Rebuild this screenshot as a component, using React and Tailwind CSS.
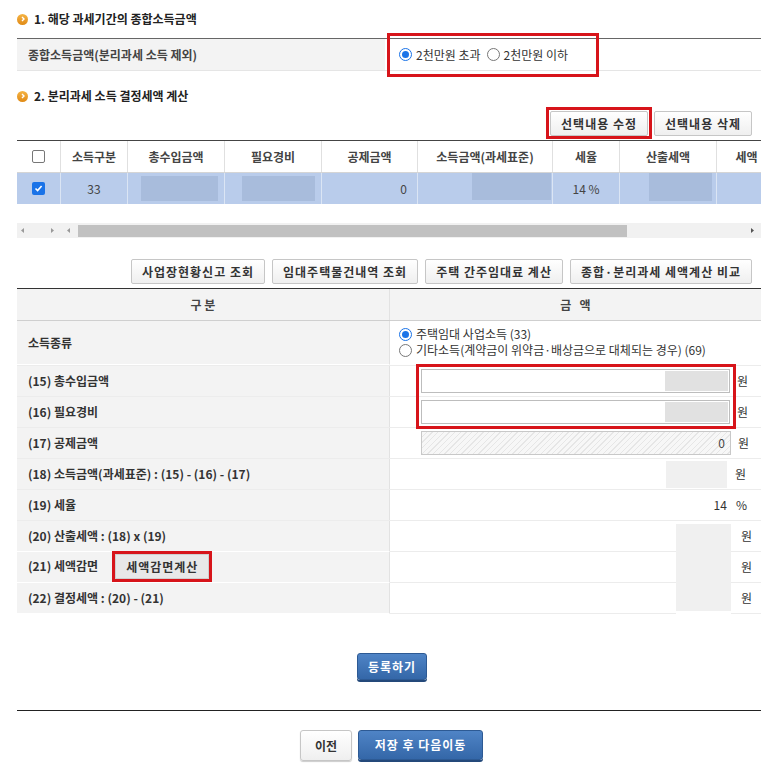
import React from 'react';

const font = { fontFamily: '"Noto Sans CJK KR", "Noto Sans", sans-serif' };

function Bullet() {
    return (
        <span className="inline-flex items-center justify-center w-[11px] h-[11px] rounded-full bg-gradient-to-b from-[#f5b443] to-[#e08a12] mr-[6px]">
            <svg width="6" height="6" viewBox="0 0 6 6">
                <path d="M2 1 L4 3 L2 5" stroke="#fff" strokeWidth="1.4" fill="none" />
            </svg>
        </span>
    );
}

function Radio({ checked }) {
    return (
        <span
            className={
                'inline-flex items-center justify-center w-[13px] h-[13px] rounded-full border mr-[4px] shrink-0 ' +
                (checked ? 'border-[#1a73e8] bg-white' : 'border-[#777] bg-white')
            }
        >
            {checked && <span className="w-[7px] h-[7px] rounded-full bg-[#1a73e8]" />}
        </span>
    );
}

function Btn({ children, className = '' }) {
    return (
        <button
            className={
                'block h-[25px] px-[10px] border border-[#c6c6c6] rounded-[2px] bg-gradient-to-b from-white to-[#efefef] text-[12px] font-bold text-[#333] tracking-[1px] whitespace-nowrap ' +
                className
            }
        >
            {children}
        </button>
    );
}

function BlueBtn({ children, className = '' }) {
    return (
        <button
            className={
                'block border border-[#2d5a94] rounded-[3px] bg-gradient-to-b from-[#4f84c6] to-[#3467a8] text-white text-[12px] font-bold tracking-[1px] shadow-[0_2px_0_#24497a] ' +
                className
            }
        >
            {children}
        </button>
    );
}

function Label({ children, className = '' }) {
    return (
        <div
            className={
                'w-[373px] shrink-0 bg-[#f3f3f3] border-r border-[#e2e2e2] pl-[11px] flex items-center text-[12px] font-bold text-[#333] ' +
                className
            }
        >
            {children}
        </div>
    );
}

const cols = [
    { w: 44, t: '' },
    { w: 67, t: '소득구분' },
    { w: 97, t: '총수입금액' },
    { w: 97, t: '필요경비' },
    { w: 96, t: '공제금액' },
    { w: 135, t: '소득금액(과세표준)' },
    { w: 67, t: '세율' },
    { w: 97, t: '산출세액' },
    { w: 60, t: '세액' },
];

export default function App() {
    return (
        <div className="w-[773px] h-[764px] bg-white pl-[17px] pr-[12px] pt-[11px] text-[#333] overflow-hidden" style={font}>
            {/* 1 */}
            <h2 className="h-[16px] flex items-center text-[12px] font-bold text-[#222]">
                <Bullet />
                1. 해당 과세기간의 종합소득금액
            </h2>
            <div className="mt-[11px] border-t border-[#666] border-b border-b-[#e5e5e5] h-[33px] flex">
                <div className="w-[368px] bg-[#f3f3f3] pl-[11px] flex items-center text-[12px] font-bold text-[#444]">
                    종합소득금액(분리과세 소득 제외)
                </div>
                <div className="relative flex-1 flex items-center pl-[14px] text-[12px] text-[#333]">
                    <span className="absolute left-[2px] top-[-6px] w-[212px] h-[44px] border-[3px] border-[#d7141a]" />
                    <Radio checked />
                    <span className="mr-[6px]">2천만원 초과</span>
                    <Radio />
                    <span>2천만원 이하</span>
                </div>
            </div>

            {/* 2 */}
            <h2 className="mt-[17px] h-[16px] flex items-center text-[12px] font-bold text-[#222]">
                <Bullet />
                2. 분리과세 소득 결정세액 계산
            </h2>
            <div className="mt-[7px] flex justify-end gap-[6px] pr-[9px]">
                <div className="relative flex">
                    <span className="absolute left-[-4px] top-[-4px] right-[-4px] bottom-[-3px] border-[3px] border-[#d7141a]" />
                    <Btn>선택내용 수정</Btn>
                </div>
                <Btn>선택내용 삭제</Btn>
            </div>

            {/* grid */}
            <div className="mt-[4px] border-t border-[#444] overflow-hidden">
                <div className="flex h-[32px] border-b border-[#d5d5d5]">
                    {cols.map((c, i) => (
                        <div
                            key={i}
                            style={{ width: c.w }}
                            className="shrink-0 flex items-center justify-center border-r border-[#e0e0e0] text-[12px] font-bold text-[#444] whitespace-nowrap"
                        >
                            {i === 0 ? (
                                <span className="w-[13px] h-[13px] border border-[#777] rounded-[2px] bg-white" />
                            ) : (
                                c.t
                            )}
                        </div>
                    ))}
                </div>
                <div className="flex h-[31px] bg-[#b9cceb]">
                    {cols.map((c, i) => (
                        <div
                            key={i}
                            style={{ width: c.w }}
                            className="shrink-0 flex items-center border-r border-[#dbe5f4] text-[12px] text-[#444]"
                        >
                            {i === 0 && (
                                <span className="mx-auto w-[13px] h-[13px] rounded-[2px] bg-[#1a73e8] flex items-center justify-center">
                                    <svg width="9" height="9" viewBox="0 0 9 9">
                                        <path d="M1.5 4.5 L3.6 6.6 L7.6 2" stroke="#fff" strokeWidth="1.6" fill="none" />
                                    </svg>
                                </span>
                            )}
                            {i === 1 && <span className="mx-auto">33</span>}
                            {i === 2 && <span className="ml-[13px] w-[77px] h-[25px] bg-[#a8bcdc]" />}
                            {i === 3 && <span className="ml-[17px] w-[73px] h-[25px] bg-[#a8bcdc]" />}
                            {i === 4 && <span className="ml-auto mr-[10px]">0</span>}
                            {i === 5 && <span className="ml-[54px] w-[79px] h-[27px] mb-[4px] bg-[#a8bcdc]" />}
                            {i === 6 && <span className="mx-auto">14 %</span>}
                            {i === 7 && <span className="ml-[29px] w-[63px] h-[28px] mb-[3px] bg-[#a8bcdc]" />}
                        </div>
                    ))}
                </div>
            </div>

            {/* scrollbar */}
            <div className="mt-[19px] h-[15px] bg-[#f1f1f1] flex items-center">
                <svg width="60" height="15" viewBox="0 0 60 15" className="shrink-0">
                    <path d="M7 5 L4 7.5 L7 10 Z" fill="#999" />
                    <path d="M34 5 L37 7.5 L34 10 Z" fill="#999" />
                    <path d="M53 5 L50 7.5 L53 10 Z" fill="#999" />
                </svg>
                <div className="ml-[1px] w-[549px] h-[12px] bg-[#c1c1c1]" />
                <div className="flex-1" />
                <svg width="12" height="15" viewBox="0 0 12 15" className="shrink-0 mr-[2px]">
                    <path d="M4 5 L7 7.5 L4 10 Z" fill="#555" />
                </svg>
            </div>

            {/* buttons */}
            <div className="mt-[21px] flex justify-end gap-[7px] pr-[9px]">
                <Btn>사업장현황신고 조회</Btn>
                <Btn>임대주택물건내역 조회</Btn>
                <Btn>주택 간주임대료 계산</Btn>
                <Btn>종합·분리과세 세액계산 비교</Btn>
            </div>

            {/* main table */}
            <div className="mt-[4px] border-t border-[#333]">
                <div className="flex h-[32px] bg-[#f3f3f3] border-b border-[#cfcfcf] text-[12px] font-bold text-[#444]">
                    <div className="w-[373px] border-r border-[#e2e2e2] flex items-center justify-center">구 분</div>
                    <div className="flex-1 flex items-center justify-center">금&nbsp;&nbsp;&nbsp;액</div>
                </div>

                <div className="flex h-[45px] border-b border-[#ececec]">
                    <Label className="border-b border-b-white">소득종류</Label>
                    <div className="flex-1 pl-[9px] pt-[5px] text-[12px] text-[#333] leading-[16px]">
                        <div className="flex items-center h-[16px]">
                            <Radio checked />
                            주택임대 사업소득 (33)
                        </div>
                        <div className="flex items-center h-[16px]">
                            <Radio />
                            기타소득(계약금이 위약금·배상금으로 대체되는 경우) (69)
                        </div>
                    </div>
                </div>

                <div className="relative">
                    <span className="absolute left-[399px] top-[-2px] w-[320px] h-[65px] border-[3px] border-[#d7141a] z-10" />
                    {['(15) 총수입금액', '(16) 필요경비'].map((t, i) => (
                        <div key={i} className="flex h-[31px] border-b border-[#ececec]">
                            <Label>{t}</Label>
                            <div className="flex-1 flex items-center pl-[31px]">
                                <div className="w-[309px] h-[24px] border border-[#bdbdbd] bg-white flex justify-end p-[1px]">
                                    <span className="w-[63px] bg-[#e1e1e1]" />
                                </div>
                                <span className="ml-[7px] text-[12px] text-[#333]">원</span>
                            </div>
                        </div>
                    ))}
                </div>

                <div className="flex h-[31px] border-b border-[#ececec]">
                    <Label>(17) 공제금액</Label>
                    <div className="flex-1 flex items-center pl-[31px]">
                        <div className="w-[310px] h-[24px] border border-[#c8c8c8] bg-[repeating-linear-gradient(135deg,#f7f7f7_0,#f7f7f7_3px,#e6e6e6_3px,#e6e6e6_4px)] flex items-center justify-end pr-[5px] text-[12px] text-[#444]">
                            0
                        </div>
                        <span className="ml-[7px] text-[12px] text-[#333]">원</span>
                    </div>
                </div>

                <div className="flex h-[31px] border-b border-[#ececec]">
                    <Label>(18) 소득금액(과세표준) : (15) - (16) - (17)</Label>
                    <div className="flex-1 flex items-center justify-end pr-[15px]">
                        <span className="w-[61px] h-[27px] bg-[#f0f0f0]" />
                        <span className="ml-[8px] text-[12px] text-[#333]">원</span>
                    </div>
                </div>

                <div className="flex h-[31px] border-b border-[#ececec]">
                    <Label>(19) 세율</Label>
                    <div className="flex-1 flex items-center justify-end pr-[14px] text-[12px] text-[#333]">
                        <span>14</span>
                        <span className="ml-[9px]">%</span>
                    </div>
                </div>

                <div className="flex">
                    <div className="shrink-0">
                        <Label className="h-[31px] border-b border-b-white">(20) 산출세액 : (18) x (19)</Label>
                        <Label className="h-[31px] border-b border-b-white">
                            <span className="self-start mt-[5px]">(21) 세액감면</span>
                            <span className="relative flex ml-[17px] mb-[1px]">
                                <span className="absolute left-[-3px] top-[-3px] right-[-3px] bottom-[-3px] border-[3px] border-[#d7141a]" />
                                <button className="block h-[25px] px-[10px] bg-[#e8e8e8] border border-[#cfcfcf] text-[12px] font-bold text-[#333] tracking-[1px]">
                                    세액감면계산
                                </button>
                            </span>
                        </Label>
                        <Label className="h-[31px] border-b border-b-white">(22) 결정세액 : (20) - (21)</Label>
                    </div>
                    <div className="flex-1 flex">
                        <div className="flex-1">
                            <div className="h-[31px] border-b border-[#ececec]" />
                            <div className="h-[31px] border-b border-[#ececec]" />
                            <div className="h-[31px] border-b border-[#ececec]" />
                        </div>
                        <div className="w-[55px] my-[3px] bg-[#f0f0f0]" />
                        <div className="w-[30px] text-[12px] text-[#333]">
                            {[0, 1, 2].map((k) => (
                                <div key={k} className="h-[31px] border-b border-[#ececec] flex items-center pl-[10px]">
                                    원
                                </div>
                            ))}
                        </div>
                    </div>
                </div>
            </div>

            <div className="mt-[39px] flex justify-center pl-[6px]">
                <BlueBtn className="w-[70px] h-[27px]">등록하기</BlueBtn>
            </div>

            <div className="mt-[30px] border-t border-[#222]" />

            <div className="mt-[19px] flex justify-center gap-[6px] pl-[5px]">
                <button className="block w-[52px] h-[31px] border border-[#c6c6c6] rounded-[3px] bg-gradient-to-b from-white to-[#efefef] text-[12px] font-bold text-[#333] shadow-[0_1px_1px_#ccc]">
                    이전
                </button>
                <BlueBtn className="w-[125px] h-[30px]">저장 후 다음이동</BlueBtn>
            </div>
        </div>
    );
}
